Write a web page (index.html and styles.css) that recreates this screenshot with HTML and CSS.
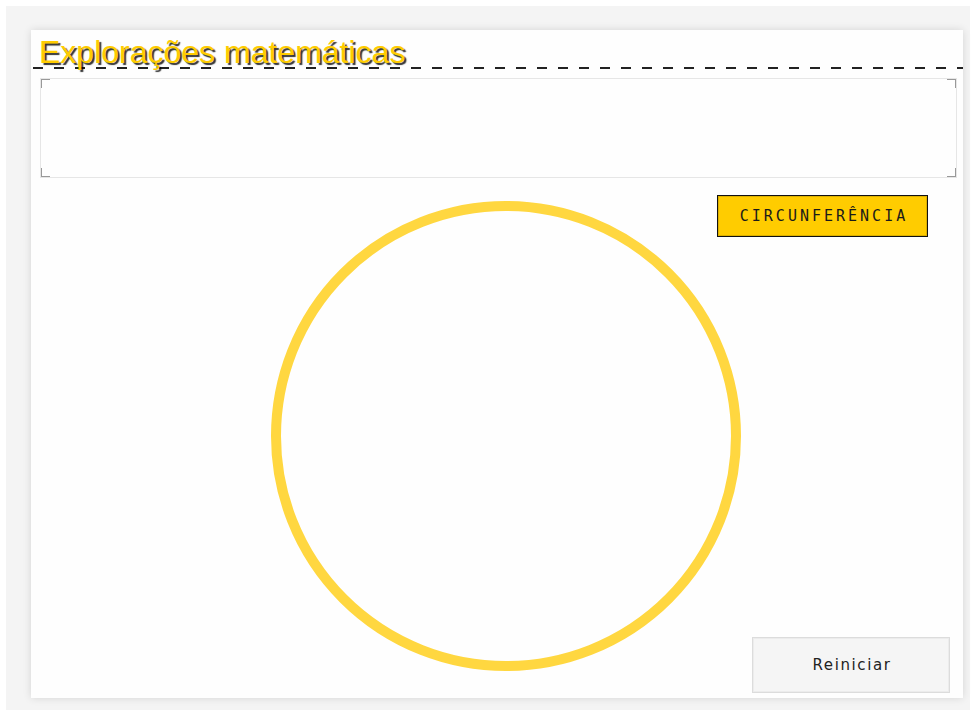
FILE: index.html
```html
<!DOCTYPE html>
<html lang="pt">
<head>
<meta charset="utf-8">
<title>Explorações matemáticas</title>
<link rel="stylesheet" href="styles.css">
</head>
<body>
<div class="frame">
  <main class="panel">
    <header class="header">
      <h1 class="title">Explorações matemáticas</h1>
      <div class="rule"></div>
    </header>
    <div class="textbox"></div>
    <section class="stage">
      <svg class="canvas" viewBox="0 0 932 520" width="932" height="520" aria-hidden="true">
        <circle cx="475" cy="258" r="230" fill="none" stroke="#ffd740" stroke-width="10"/>
      </svg>
      <div class="shape-label">CIRCUNFERÊNCIA</div>
      <button class="reset" type="button">Reiniciar</button>
    </section>
  </main>
</div>
</body>
</html>
```
FILE: styles.css
```css
html, body {
  margin: 0;
  padding: 0;
  background: #ffffff;
}

.frame {
  margin: 6px;
  width: 964px;
  height: 704px;
  box-sizing: border-box;
  padding: 24px 7px 12px 25px;
  background: #f4f4f4;
}

.panel {
  width: 932px;
  height: 668px;
  background: #fefefe;
  box-shadow: 0 0 8px rgba(0, 0, 0, 0.13);
  display: flex;
  flex-direction: column;
}

.header {
  padding-left: 8px;
}

.title {
  margin: 0;
  padding-top: 7px;
  font-family: "Liberation Sans", Arial, sans-serif;
  font-weight: normal;
  font-size: 32px;
  line-height: 30px;
  color: #ffcc00;
  text-shadow: 2px 2px 1px rgba(0, 0, 0, 0.8);
  white-space: nowrap;
}

.rule {
  margin-left: -6px;
  height: 2px;
  background: repeating-linear-gradient(to right, #222 0 10px, transparent 10px 21px);
}

.textbox {
  margin: 9px 6px 0 9px;
  height: 100px;
  box-sizing: border-box;
  border: 1px solid #e6e6e6;
  background-origin: border-box;
  background-clip: border-box;
  background-repeat: no-repeat;
  background-image:
    linear-gradient(#999, #999), linear-gradient(#999, #999),
    linear-gradient(#999, #999), linear-gradient(#999, #999),
    linear-gradient(#999, #999), linear-gradient(#999, #999),
    linear-gradient(#999, #999), linear-gradient(#999, #999);
  background-size:
    10px 2px, 2px 10px,
    10px 2px, 2px 10px,
    10px 2px, 2px 10px,
    10px 2px, 2px 10px;
  background-position:
    left top, left top,
    right top, right top,
    left bottom, left bottom,
    right bottom, right bottom;
}

.stage {
  position: relative;
  flex: 1;
  display: flex;
  flex-direction: column;
  align-items: flex-end;
}

.canvas {
  position: absolute;
  left: 0;
  top: 0;
}

.shape-label {
  position: relative;
  margin: 17px 35px 0 0;
  width: 211px;
  height: 42px;
  box-sizing: border-box;
  border: 1px solid #111;
  box-shadow: inset 0 0 0 1px rgba(120, 90, 0, 0.25);
  background: #ffcc00;
  display: flex;
  align-items: center;
  justify-content: center;
  padding-left: 3px;
  font-family: "DejaVu Sans Mono", monospace;
  font-size: 15px;
  letter-spacing: 3px;
  color: #1a1a1a;
}

.reset {
  position: relative;
  margin: auto 13px 5px 0;
  width: 198px;
  height: 56px;
  box-sizing: border-box;
  border: 1px solid #dcdcdc;
  box-shadow: inset 0 0 0 1px #ececec;
  background: #f5f5f5;
  font-family: "DejaVu Sans", sans-serif;
  font-size: 15px;
  letter-spacing: 1.6px;
  color: #222;
  padding: 0 0 0 2px;
  cursor: pointer;
}
```
